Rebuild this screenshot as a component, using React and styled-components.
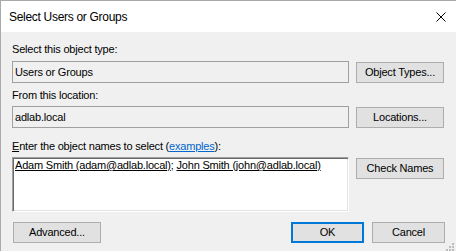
import React from "react";
import styled, { createGlobalStyle } from "styled-components";

const Global = createGlobalStyle`
  html, body { margin: 0; padding: 0; background: #f0f0f0; overflow: hidden; }
  body { font-family: "Liberation Sans", Arial, sans-serif; }
`;

const Window = styled.div`
  position: relative;
  width: 456px;
  height: 251px;
  box-sizing: border-box;
  border-left: 1px solid #aaaaaa;
  border-top: 1px solid #aaaaaa;
  background: #f0f0f0;
  display: flex;
  flex-direction: column;
  overflow: hidden;
`;

const TitleBar = styled.div`
  height: 31px;
  flex: none;
  background: #ffffff;
  display: flex;
  align-items: center;
  justify-content: space-between;
  padding: 0 10px 0 8px;
`;

const Title = styled.span`
  font-size: 12px;
  line-height: 14px;
  letter-spacing: -0.3px;
  color: #000;
`;

const CloseIcon = styled.svg`
  width: 10px;
  height: 10px;
  display: block;
`;

const Body = styled.div`
  flex: 1;
  padding: 11px 11px 0 11px;
  display: flex;
  flex-direction: column;
  font-size: 11px;
  letter-spacing: -0.2px;
  color: #000;
`;

const Label = styled.div`
  line-height: 13px;
  height: 13px;
  margin-top: ${(p) => p.$mt || 0}px;
  margin-bottom: ${(p) => p.$mb || 4}px;
  white-space: nowrap;
`;

const Key = styled.span`
  text-decoration: underline;
`;

const Link = styled.span`
  color: #0066cc;
  text-decoration: underline;
`;

const Row = styled.div`
  display: flex;
  align-items: ${(p) => (p.$top ? "flex-start" : "center")};
  gap: 7px;
`;

const Field = styled.div`
  width: 337px;
  height: 22px;
  box-sizing: border-box;
  border: 1px solid #a0a0a0;
  background: #f0f0f0;
  padding: 0 2px;
  display: flex;
  align-items: center;
  line-height: 13px;
  white-space: nowrap;
`;

const NamesBox = styled.div`
  width: 337px;
  height: 55px;
  box-sizing: border-box;
  background: #ffffff;
  border-top: 1px solid #a0a0a0;
  border-left: 1px solid #a0a0a0;
  border-right: 1px solid #ffffff;
  border-bottom: 1px solid #ffffff;
  box-shadow: inset 1px 1px 0 #696969, inset -1px -1px 0 #e3e3e3;
  padding: 1px 2px;
  line-height: 13px;
  white-space: nowrap;
`;

const Name = styled.span`
  text-decoration: underline;
`;

const Button = styled.button`
  font-family: "Liberation Sans", Arial, sans-serif;
  font-size: 11px;
  letter-spacing: -0.2px;
  color: #000;
  width: ${(p) => p.$w || 88}px;
  height: 21px;
  box-sizing: border-box;
  padding: 0;
  margin: ${(p) => p.$m || 0};
  background: #e1e1e1;
  border: ${(p) => (p.$default ? "2px solid #0078d7" : "1px solid #adadad")};
  line-height: 13px;
  flex: none;
`;

const Footer = styled.div`
  margin-top: 10px;
  display: flex;
  justify-content: space-between;
  align-items: center;
`;

const FooterRight = styled.div`
  display: flex;
  gap: 8px;
`;

const Grip = styled.svg`
  position: absolute;
  right: 2px;
  bottom: 0px;
  width: 9px;
  height: 9px;
`;

export default function App() {
  return (
    <>
      <Global />
      <Window>
        <TitleBar>
          <Title>Select Users or Groups</Title>
          <CloseIcon viewBox="0 0 10 10">
            <path d="M0.5 0.5 L9.5 9.5 M9.5 0.5 L0.5 9.5" stroke="#000" strokeWidth="1" fill="none" />
          </CloseIcon>
        </TitleBar>
        <Body>
          <Label $mb={5}>Select this object type:</Label>
          <Row>
            <Field>Users or Groups</Field>
            <Button>Object Types...</Button>
          </Row>
          <Label $mt={6}>From this location:</Label>
          <Row>
            <Field>adlab.local</Field>
            <Button>Locations...</Button>
          </Row>
          <Label $mt={12}>
            <Key>E</Key>nter the object names to select (<Link>examples</Link>):
          </Label>
          <Row $top>
            <NamesBox>
              <Name>Adam Smith (adam@adlab.local)</Name>; <Name>John Smith (john@adlab.local)</Name>
            </NamesBox>
            <Button $m="1px 0 0 0">Check Names</Button>
          </Row>
          <Footer>
            <Button $m="0 0 0 1px">Advanced...</Button>
            <FooterRight>
              <Button $w={73} $default>OK</Button>
              <Button $w={73}>Cancel</Button>
            </FooterRight>
          </Footer>
        </Body>
        <Grip viewBox="0 0 9 9">
          <rect x="7" y="1" width="2" height="2" fill="#bcbcbc" />
          <rect x="4" y="4" width="2" height="2" fill="#bcbcbc" />
          <rect x="7" y="4" width="2" height="2" fill="#bcbcbc" />
          <rect x="1" y="7" width="2" height="2" fill="#bcbcbc" />
          <rect x="4" y="7" width="2" height="2" fill="#bcbcbc" />
          <rect x="7" y="7" width="2" height="2" fill="#bcbcbc" />
        </Grip>
      </Window>
    </>
  );
}
